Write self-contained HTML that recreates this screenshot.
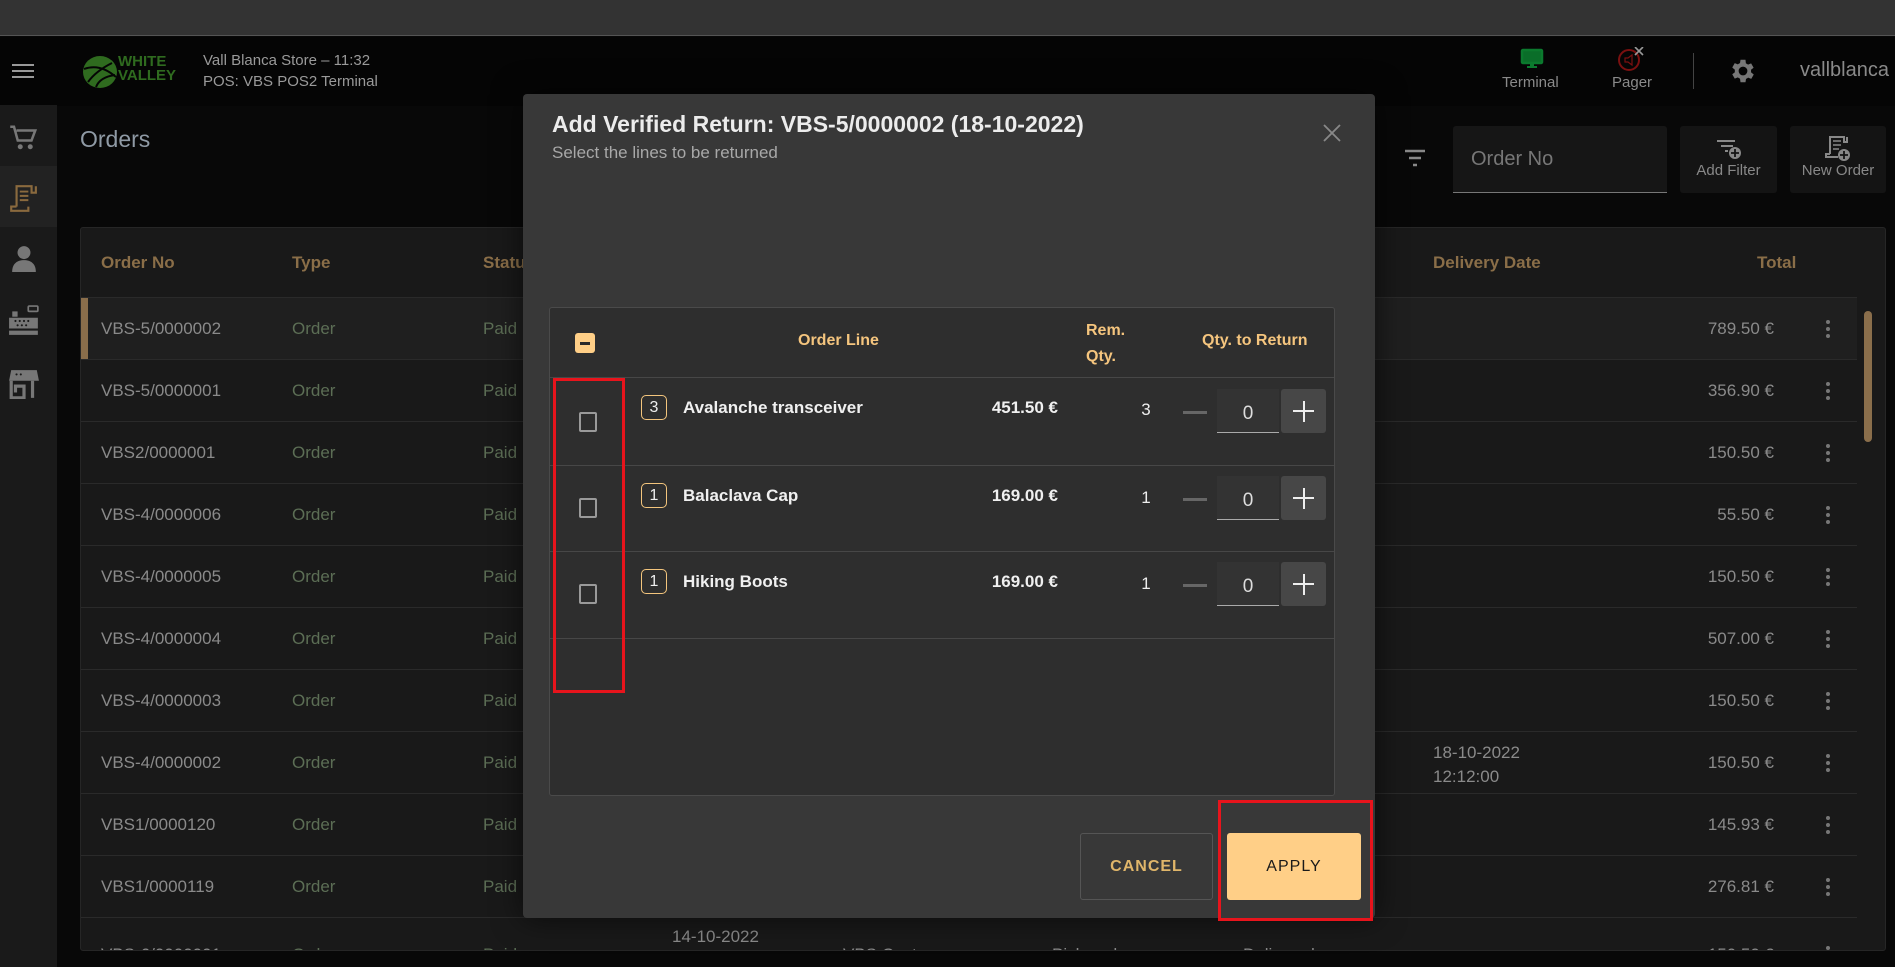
<!DOCTYPE html>
<html><head><meta charset="utf-8">
<style>
*{box-sizing:border-box;margin:0;padding:0}
body{width:1895px;height:967px;overflow:hidden;background:#080808;font-family:"Liberation Sans Narrow","Liberation Sans",sans-serif;position:relative;color:#8a8a8a}
.abs{position:absolute}
.topbar{left:0;top:0;width:1895px;height:36px;background:#333;border-bottom:1px solid #555}
.header{left:0;top:37px;width:1895px;height:69px;background:#050505}
.side{left:0;top:105px;width:57px;height:862px;background:#1a1a1a}
.tbl{left:80px;top:227px;width:1806px;height:724px;background:#191919;border:1px solid #262626;border-radius:3px;overflow:hidden}
.th{position:absolute;top:0;height:70px;line-height:70px;color:#8a6e48;font-weight:bold;font-size:17px}
.row{position:absolute;left:0;width:1776px;height:62px;border-top:1px solid #2a2a2a;font-size:17px}
.row span{position:absolute;top:0;line-height:62px}
.c1{left:20px;color:#8a8a8a}.c2{left:211px;color:#5c6e55}.c3{left:402px;color:#5c6e55}
.amt{right:83px;color:#8a8a8a}
.keb{left:1745px;top:22px;width:4px}
.keb i{display:block;width:4px;height:4px;border-radius:2px;background:#777;margin-bottom:3px}
.modal{left:523px;top:94px;width:852px;height:824px;background:#383838;border-radius:4px;box-shadow:0 0 30px rgba(0,0,0,.6)}
.inner{left:26px;top:213px;width:786px;height:489px;background:#2e2e2e;border:1px solid #4a4a4a;border-radius:3px}
.ir{position:absolute;left:0;width:784px;border-top:1px solid #474747}
.cb{position:absolute;width:18px;height:20px;border:2px solid #9a9a9a;border-radius:2px}
.badge{position:absolute;left:91px;width:26px;height:25px;border:1px solid #f3c57d;border-radius:5px;color:#eee;font-size:16px;text-align:center;line-height:23px}
.name{position:absolute;left:133px;color:#f0f0f0;font-size:17px;font-weight:bold}
.price{position:absolute;right:276px;color:#f0f0f0;font-size:17px;font-weight:bold}
.rq{position:absolute;left:586px;width:20px;text-align:center;color:#eee;font-size:17px}
.minus{position:absolute;left:633px;width:24px;height:3px;background:#666}
.inp{position:absolute;left:667px;width:62px;height:44px;background:#333;border-bottom:1px solid #aaa;color:#ddd;font-size:19px;text-align:center;line-height:50px}
.plus{position:absolute;left:731px;width:45px;height:44px;background:#474747;border-radius:3px}
.plus:before{content:"";position:absolute;left:12px;top:21px;width:21px;height:2px;background:#eee}
.plus:after{content:"";position:absolute;left:21.5px;top:12px;width:2px;height:21px;background:#eee}
</style></head><body>
<div class="abs topbar"></div>
<div class="abs header">
  <div class="abs" style="left:12px;top:27px;width:22px;height:2px;background:#999;box-shadow:0 6px 0 #999,0 12px 0 #999;top:27px"></div>
  <svg class="abs" style="left:82px;top:18px" width="36" height="34" viewBox="0 0 36 34"><ellipse cx="18" cy="17" rx="17" ry="16" fill="#2f6b1f"/><path d="M2 14 Q18 8 34 22 M6 27 Q14 16 30 8 M14 32 Q18 22 33 20" stroke="#050505" stroke-width="2" fill="none"/></svg>
  <div class="abs" style="left:118px;top:18px;color:#2f6b1f;font-weight:bold;font-size:15px;line-height:14px;font-family:'Liberation Sans',sans-serif">WHITE<br>VALLEY</div>
  <div class="abs" style="left:203px;top:13px;color:#9a9a9a;font-size:15px;line-height:21px">Vall Blanca Store – 11:32<br>POS: VBS POS2 Terminal</div>
  <svg class="abs" style="left:1520px;top:10px" width="24" height="24" viewBox="0 0 24 24"><rect x="2" y="3" width="20" height="13" rx="1" fill="none" stroke="#0b7a2e" stroke-width="2.5"/><rect x="2" y="3" width="20" height="13" fill="#0b7a2e" opacity=".9"/><rect x="10" y="16" width="4" height="3" fill="#0b7a2e"/><rect x="7" y="19" width="10" height="2" fill="#0b7a2e"/></svg>
  <div class="abs" style="left:1502px;top:37px;color:#8a8a8a;font-size:15px">Terminal</div>
  <svg class="abs" style="left:1617px;top:10px" width="28" height="26" viewBox="0 0 28 26"><circle cx="12" cy="13" r="10" fill="none" stroke="#7a1010" stroke-width="2"/><path d="M8 11h3l4-3v10l-4-3H8z" fill="none" stroke="#7a1010" stroke-width="1.2"/><path d="M18 0l8 8M26 0l-8 8" stroke="#999" stroke-width="1.6"/></svg>
  <div class="abs" style="left:1612px;top:37px;color:#8a8a8a;font-size:15px">Pager</div>
  <div class="abs" style="left:1693px;top:16px;width:1px;height:36px;background:#444"></div>
  <svg class="abs" style="left:1728px;top:19px" width="30" height="30" viewBox="0 0 24 24"><path fill="#777" d="M19.4 13a7.5 7.5 0 0 0 0-2l2.1-1.6-2-3.5-2.5 1a7 7 0 0 0-1.7-1L15 3h-4l-.4 2.7a7 7 0 0 0-1.7 1l-2.5-1-2 3.5L6.5 11a7.5 7.5 0 0 0 0 2l-2.1 1.6 2 3.5 2.5-1a7 7 0 0 0 1.7 1L11 21h4l.4-2.7a7 7 0 0 0 1.7-1l2.5 1 2-3.5zM13 15.5a3.5 3.5 0 1 1 0-7 3.5 3.5 0 0 1 0 7z" transform="translate(-1 0)"/></svg>
  <div class="abs" style="left:1800px;top:22px;color:#8a8a8a;font-size:20px">vallblanca</div>
</div>
<div class="abs side">
  <div class="abs" style="left:0;top:61px;width:57px;height:61px;background:#222"></div>
  <svg class="abs" style="left:9px;top:18px" width="30" height="30" viewBox="0 0 24 24"><path d="M1 3h3l3 11h11l3-8H6" fill="none" stroke="#777" stroke-width="2"/><circle cx="9" cy="19" r="2" fill="#777"/><circle cx="17" cy="19" r="2" fill="#777"/></svg>
  <svg class="abs" style="left:9px;top:78px" width="28" height="30" viewBox="0 0 26 28"><path d="M7 22V3h14v6h4V3M7 22H2v4h16v-4M18 26V22" fill="none" stroke="#8a6a3e" stroke-width="2"/><path d="M10 8h8M10 12h8M10 16h8" stroke="#8a6a3e" stroke-width="1.8"/></svg>
  <svg class="abs" style="left:11px;top:139px" width="26" height="28" viewBox="0 0 24 26"><circle cx="12" cy="8" r="6" fill="#777"/><path d="M1 26c0-8 5-11 11-11s11 3 11 11z" fill="#777"/></svg>
  <svg class="abs" style="left:8px;top:200px" width="32" height="32" viewBox="0 0 30 30"><rect x="19" y="1" width="9" height="5" rx="1" fill="none" stroke="#777" stroke-width="1.6"/><rect x="4" y="6" width="5" height="5" fill="#777"/><path d="M1 12h27v10H1z" fill="#777"/><path d="M1 24h27v4H1z" fill="#777"/><g fill="#1a1a1a"><circle cx="7" cy="15" r="1"/><circle cx="11" cy="15" r="1"/><circle cx="15" cy="15" r="1"/><circle cx="19" cy="15" r="1"/><circle cx="9" cy="19" r="1"/><circle cx="13" cy="19" r="1"/><circle cx="17" cy="19" r="1"/></g></svg>
  <svg class="abs" style="left:8px;top:264px" width="32" height="30" viewBox="0 0 30 28"><path d="M3 1h24l2 10H1z" fill="#777"/><path d="M3 11v16h12V16h-8v6M23 11v16" fill="none" stroke="#777" stroke-width="3"/><circle cx="8" cy="5" r="1" fill="#1a1a1a"/><circle cx="12" cy="5" r="1" fill="#1a1a1a"/></svg>
</div>
<div class="abs" style="left:80px;top:126px;color:#8f9aa5;font-size:23px;font-family:'Liberation Sans',sans-serif">Orders</div>
<svg class="abs" style="left:1403px;top:148px" width="24" height="20" viewBox="0 0 24 20"><path d="M2 3h20M6 10h12M10 17h4" stroke="#888" stroke-width="2.5"/></svg>
<div class="abs" style="left:1453px;top:126px;width:214px;height:67px;background:#161616;border-bottom:1px solid #777;border-radius:3px 3px 0 0;color:#777;font-size:20px;line-height:67px;padding-left:18px">Order No</div>
<div class="abs" style="left:1680px;top:126px;width:97px;height:67px;background:#141414;border-radius:3px;color:#888;font-size:15px;text-align:center;padding-top:36px">Add Filter
<svg class="abs" style="left:35px;top:13px" width="28" height="22" viewBox="0 0 28 22"><path d="M2 2h18M6 7h12M10 12h3" stroke="#888" stroke-width="2"/><circle cx="20" cy="14" r="6" fill="#888"/><path d="M20 10v8M16 14h8" stroke="#141414" stroke-width="1.8"/></svg></div>
<div class="abs" style="left:1790px;top:126px;width:96px;height:67px;background:#141414;border-radius:3px;color:#888;font-size:15px;text-align:center;padding-top:36px">New Order
<svg class="abs" style="left:33px;top:9px" width="30" height="28" viewBox="0 0 30 28"><path d="M7 19V2h14v5h3V2M7 19H3v3h12" fill="none" stroke="#888" stroke-width="2"/><path d="M10 6h8M10 10h8M10 14h6" stroke="#888" stroke-width="1.6"/><circle cx="21" cy="20" r="6" fill="#888"/><path d="M21 16v8M17 20h8" stroke="#141414" stroke-width="1.8"/></svg></div>

<div class="abs tbl">
  <div class="th" style="left:20px">Order No</div>
  <div class="th" style="left:211px">Type</div>
  <div class="th" style="left:402px">Status</div>
  <div class="th" style="left:1352px">Delivery Date</div>
  <div class="th" style="left:1676px">Total</div>
  <div class="row" style="top:69px;background:#1f1f1f"><div class="abs" style="left:0;top:0;width:7px;height:62px;background:#8a6e4b"></div><span class="c1">VBS-5/0000002</span><span class="c2">Order</span><span class="c3">Paid</span><span class="amt">789.50 €</span><div class="abs keb"><i></i><i></i><i></i></div></div>
  <div class="row" style="top:131px"><span class="c1">VBS-5/0000001</span><span class="c2">Order</span><span class="c3">Paid</span><span class="amt">356.90 €</span><div class="abs keb"><i></i><i></i><i></i></div></div>
  <div class="row" style="top:193px"><span class="c1">VBS2/0000001</span><span class="c2">Order</span><span class="c3">Paid</span><span class="amt">150.50 €</span><div class="abs keb"><i></i><i></i><i></i></div></div>
  <div class="row" style="top:255px"><span class="c1">VBS-4/0000006</span><span class="c2">Order</span><span class="c3">Paid</span><span class="amt">55.50 €</span><div class="abs keb"><i></i><i></i><i></i></div></div>
  <div class="row" style="top:317px"><span class="c1">VBS-4/0000005</span><span class="c2">Order</span><span class="c3">Paid</span><span class="amt">150.50 €</span><div class="abs keb"><i></i><i></i><i></i></div></div>
  <div class="row" style="top:379px"><span class="c1">VBS-4/0000004</span><span class="c2">Order</span><span class="c3">Paid</span><span class="amt">507.00 €</span><div class="abs keb"><i></i><i></i><i></i></div></div>
  <div class="row" style="top:441px"><span class="c1">VBS-4/0000003</span><span class="c2">Order</span><span class="c3">Paid</span><span class="amt">150.50 €</span><div class="abs keb"><i></i><i></i><i></i></div></div>
  <div class="row" style="top:503px"><span class="c1">VBS-4/0000002</span><span class="c2">Order</span><span class="c3">Paid</span><span style="left:1352px;top:9px;line-height:24px;color:#8a8a8a">18-10-2022<br>12:12:00</span><span class="amt">150.50 €</span><div class="abs keb"><i></i><i></i><i></i></div></div>
  <div class="row" style="top:565px"><span class="c1">VBS1/0000120</span><span class="c2">Order</span><span class="c3">Paid</span><span class="amt">145.93 €</span><div class="abs keb"><i></i><i></i><i></i></div></div>
  <div class="row" style="top:627px"><span class="c1">VBS1/0000119</span><span class="c2">Order</span><span class="c3">Paid</span><span class="amt">276.81 €</span><div class="abs keb"><i></i><i></i><i></i></div></div>
  <div class="row" style="top:689px"><span class="c1" style="top:6px">VBS-6/0000001</span><span class="c2" style="top:6px">Order</span><span class="c3" style="top:6px">Paid</span><span style="left:591px;top:-12px;color:#8a8a8a">14-10-2022</span><span style="left:762px;top:6px;color:#8a8a8a">VBS Customer</span><span style="left:971px;top:6px;color:#8a8a8a">Pick and carry</span><span style="left:1162px;top:6px;color:#8a8a8a">Delivered</span><span class="amt" style="top:6px">150.50 €</span><div class="abs keb" style="top:28px"><i></i><i></i><i></i></div></div>
  <div class="abs" style="left:1783px;top:83px;width:8px;height:131px;border-radius:4px;background:#8a6e4b"></div>
</div>

<div class="abs modal">
  <div class="abs" style="left:29px;top:17px;color:#ececec;font-size:23px;font-weight:bold">Add Verified Return: VBS-5/0000002 (18-10-2022)</div>
  <div class="abs" style="left:29px;top:49px;color:#a8a8a8;font-size:17px">Select the lines to be returned</div>
  <svg class="abs" style="left:799px;top:29px" width="20" height="20" viewBox="0 0 20 20"><path d="M2 2l16 16M18 2L2 18" stroke="#888" stroke-width="1.8"/></svg>
  <div class="abs inner">
    <div class="abs" style="left:25px;top:25px;width:20px;height:20px;background:#ffcf87;border-radius:3px"><div class="abs" style="left:5px;top:9px;width:10px;height:3px;background:#2a2a2a"></div></div>
    <div class="abs" style="left:248px;top:24px;color:#f5c57e;font-weight:bold;font-size:16px">Order Line</div>
    <div class="abs" style="left:536px;top:10px;color:#f5c57e;font-weight:bold;font-size:16px;line-height:26px">Rem.<br>Qty.</div>
    <div class="abs" style="left:652px;top:24px;color:#f5c57e;font-weight:bold;font-size:16px">Qty. to Return</div>
    <div class="ir" style="top:69px;height:88px">
      <div class="cb" style="left:29px;top:34px"></div><div class="badge" style="top:17px">3</div>
      <div class="name" style="top:20px">Avalanche transceiver</div><div class="price" style="top:20px">451.50 €</div>
      <div class="rq" style="top:22px">3</div><div class="minus" style="top:33px"></div>
      <div class="inp" style="top:11px">0</div><div class="plus" style="top:11px"></div>
    </div>
    <div class="ir" style="top:157px;height:86px">
      <div class="cb" style="left:29px;top:32px"></div><div class="badge" style="top:17px">1</div>
      <div class="name" style="top:20px">Balaclava Cap</div><div class="price" style="top:20px">169.00 €</div>
      <div class="rq" style="top:22px">1</div><div class="minus" style="top:32px"></div>
      <div class="inp" style="top:10px">0</div><div class="plus" style="top:10px"></div>
    </div>
    <div class="ir" style="top:243px;height:87px">
      <div class="cb" style="left:29px;top:32px"></div><div class="badge" style="top:17px">1</div>
      <div class="name" style="top:20px">Hiking Boots</div><div class="price" style="top:20px">169.00 €</div>
      <div class="rq" style="top:22px">1</div><div class="minus" style="top:32px"></div>
      <div class="inp" style="top:10px">0</div><div class="plus" style="top:10px"></div>
    </div>
    <div class="ir" style="top:330px;height:0"></div>
  </div>
  <div class="abs" style="left:557px;top:739px;width:133px;height:67px;border:1px solid #555;border-radius:3px;color:#e0b66a;font-weight:bold;font-size:16px;letter-spacing:1px;text-align:center;line-height:65px">CANCEL</div>
  <div class="abs" style="left:704px;top:739px;width:134px;height:67px;background:#ffcf87;border-radius:3px;color:#1a1a1a;font-size:16px;letter-spacing:1px;text-align:center;line-height:67px">APPLY</div>
</div>
<div class="abs" style="left:553px;top:378px;width:72px;height:315px;border:3px solid #e8141c"></div>
<div class="abs" style="left:1218px;top:800px;width:155px;height:121px;border:3px solid #e8141c"></div>
</body></html>
